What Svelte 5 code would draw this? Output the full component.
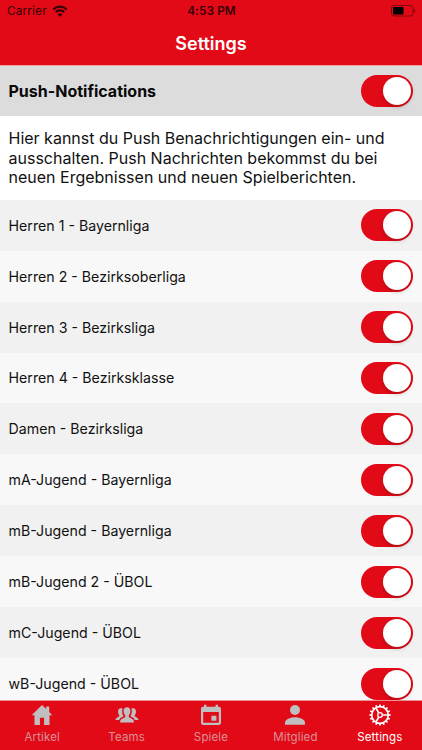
<script>
  const teams = [
    'Herren 1 - Bayernliga',
    'Herren 2 - Bezirksoberliga',
    'Herren 3 - Bezirksliga',
    'Herren 4 - Bezirksklasse',
    'Damen - Bezirksliga',
    'mA-Jugend - Bayernliga',
    'mB-Jugend - Bayernliga',
    'mB-Jugend 2 - ÜBOL',
    'mC-Jugend - ÜBOL',
    'wB-Jugend - ÜBOL'
  ];
  const tabs = ['Artikel', 'Teams', 'Spiele', 'Mitglied', 'Settings'];
  let enabled = $state(teams.map(() => true));
  let push = $state(true);
  let active = $state('Settings');
  const teeth = Array.from({ length: 16 }, (_, i) => i * 22.5);
</script>

{#snippet toggle(on, label, flip)}
  <button class="switch" class:off={!on} role="switch" aria-checked={on} aria-label={label} onclick={flip}>
    <span class="knob"></span>
  </button>
{/snippet}

<div class="screen">
  <header>
    <div class="status">
      <div class="carrier">
        <span>Carrier</span>
        <svg width="16" height="12" viewBox="0 0 16 12" fill="none" stroke="#350004" stroke-width="2.1">
          <path d="M1.2 4.4a9.7 9.7 0 0 1 13.6 0" />
          <path d="M3.7 7.1a6.2 6.2 0 0 1 8.6 0" />
          <path d="M8 11.7 5.7 9.4a3.3 3.3 0 0 1 4.6 0z" fill="#350004" stroke="none" />
        </svg>
      </div>
      <span class="time">4:53 PM</span>
      <svg class="battery" width="25" height="12" viewBox="0 0 25 12">
        <rect x=".5" y=".5" width="21.5" height="10.5" rx="2.6" fill="none" stroke="#86060d" />
        <rect x="2" y="2" width="10.5" height="7.5" rx="1" fill="#000" />
        <path d="M23.2 3.9c1.5.5 1.5 3.2 0 3.7z" fill="#86060d" />
      </svg>
    </div>
    <h1>Settings</h1>
  </header>

  <main>
    <section class="push">
      <h2>Push-Notifications</h2>
      {@render toggle(push, 'Push-Notifications', () => (push = !push))}
    </section>
    <p>
      Hier kannst du Push Benachrichtigungen ein- und<br />
      ausschalten. Push Nachrichten bekommst du bei<br />
      neuen Ergebnissen und neuen Spielberichten.
    </p>
    <ul>
      {#each teams as team, i}
        <li>
          <span>{team}</span>
          {@render toggle(enabled[i], team, () => (enabled[i] = !enabled[i]))}
        </li>
      {/each}
    </ul>
  </main>

  <nav>
    {#each tabs as tab}
      <button class="tab" class:active={active === tab} onclick={() => (active = tab)}>
        <svg width="24" height="24" viewBox="0 0 24 24" fill="currentColor">
          {#if tab === 'Artikel'}
            <path d="M12 2 1.7 12.2h2.8V22h5.4v-7.2h4.2V22h5.4v-9.8h2.8l-3.1-3.1V3.5h-3v2.6z" />
          {:else if tab === 'Teams'}
            <path d="M12 4.2c-2.4 0-3.6 1.8-3.4 4.1.2 2 .8 3.2 1.6 4v1.6c-.3.9-4.7 1.4-5.1 4.5v1h13.8v-1c-.4-3.1-4.8-3.6-5.1-4.5v-1.6c.8-.8 1.4-2 1.6-4 .2-2.3-1-4.1-3.4-4.1z" />
            <path d="M7.6 5.6C4.9 4.5 2.9 6 3 8.5c0 1.6.5 2.8 1.2 3.5v1.3C3.7 14.2.7 14.4.5 17h3.7c.6-1.8 2.5-2.8 4.3-3.4v-.5c-1.3-1.9-1.9-4.8-.9-7.5zM16.4 5.6c2.7-1.1 4.7.4 4.6 2.9 0 1.6-.5 2.8-1.2 3.5v1.3c.5.9 3.5 1.1 3.7 3.7h-3.7c-.6-1.8-2.5-2.8-4.3-3.4v-.5c1.3-1.9 1.9-4.8.9-7.5z" />
          {:else if tab === 'Spiele'}
            <path fill-rule="evenodd" d="M5 1.8h2.4v2h9.2v-2H19v2h.8c1.3 0 2.2.9 2.2 2.1v13.9c0 1.2-.9 2.2-2.2 2.2H4.2C2.9 22 2 21 2 19.800V5.900c0-1.200.9-2.100 2.200-2.100H5zM4.200 8.900v10.900h15.600V8.900zM12.400 12.800h5v5h-5z" />
          {:else if tab === 'Mitglied'}
            <circle cx="12" cy="7" r="5" />
            <path d="M2 21.800v-2.400c0-3.400 6.700-5.200 10-5.200s10 1.800 10 5.200v2.400z" />
          {:else}
            <g fill="none" stroke="currentColor">
              <circle cx="12" cy="12" r="8.300" stroke-width="1.700" />
              {#each teeth as angle}
                <path d="M12 3.700V1.400" stroke-width="1.700" transform="rotate({angle} 12 12)" />
              {/each}
              <circle cx="12" cy="12" r="2.300" stroke-width="1.300" />
              <path d="M14.300 12h6M10.850 10l-3-5.200M10.850 14l-3 5.200" stroke-width="1.600" />
            </g>
          {/if}
        </svg>
        <span>{tab}</span>
      </button>
    {/each}
  </nav>
</div>

<style>
  .screen {
    width: 422px;
    height: 750px;
    display: flex;
    flex-direction: column;
    overflow: hidden;
    background: #fff;
    color: #111;
    font-family: Inter, 'Liberation Sans', sans-serif;
  }
  header {
    flex: none;
    box-sizing: border-box;
    height: 66px;
    background: #e30a17;
    border-bottom: 1px solid #f3a0a5;
  }
  .status {
    height: 22px;
    padding: 0 6px 0 7px;
    display: grid;
    grid-template-columns: 1fr auto 1fr;
    align-items: center;
    color: #350004;
    font-size: 11.8px;
  }
  .carrier {
    display: flex;
    align-items: center;
    gap: 5px;
    letter-spacing: .15px;
  }
  .time { font-weight: 600; letter-spacing: .1px; }
  .battery { justify-self: end; }
  h1 {
    margin: 0;
    text-align: center;
    font-size: 18px;
    line-height: 43px;
    font-weight: 600;
    color: #fff;
  }
  main { flex: 1; min-height: 0; overflow: hidden; }
  .push, li {
    box-sizing: border-box;
    display: flex;
    align-items: center;
    justify-content: space-between;
    padding: 0 9px 0 8.500px;
  }
  .push { height: 50px; background: #dcdcdc; }
  h2 {
    margin: 0;
    font-size: 16px;
    font-weight: 700;
    color: #080808;
  }
  p {
    box-sizing: border-box;
    height: 83.700px;
    margin: 0;
    padding: 13px 0 0 8.500px;
    font-size: 16px;
    line-height: 19.500px;
    white-space: nowrap;
  }
  ul { margin: 0; padding: 0; list-style: none; }
  li {
    height: 50.950px;
    background: #f1f1f1;
    font-size: 14.200px;
  }
  li:nth-child(even) { background: #f8f8f8; }
  .switch {
    flex: none;
    width: 52px;
    height: 32px;
    border: 0;
    border-radius: 16px;
    padding: 2px;
    display: flex;
    justify-content: flex-end;
    background: #e30a17;
  }
  .switch.off { justify-content: flex-start; background: #ccc; }
  .knob {
    width: 28px;
    height: 28px;
    border-radius: 50%;
    background: #fff;
    box-shadow: 0 2px 4px rgba(0, 0, 0, .2);
  }
  nav {
    flex: none;
    box-sizing: border-box;
    height: 50px;
    display: flex;
    background: #e30a17;
    border-top: 1px solid #ee8f95;
  }
  .tab {
    flex: 1;
    display: flex;
    flex-direction: column;
    align-items: center;
    padding: 2px 0 0;
    border: 0;
    background: none;
    color: #bfbfbf;
    font: 11.500px/16px Inter, 'Liberation Sans', sans-serif;
  }
  .tab span { color: #d99297; margin-top: 2px; letter-spacing: .15px; }
  .tab.active, .tab.active span { color: #fff; }
</style>
